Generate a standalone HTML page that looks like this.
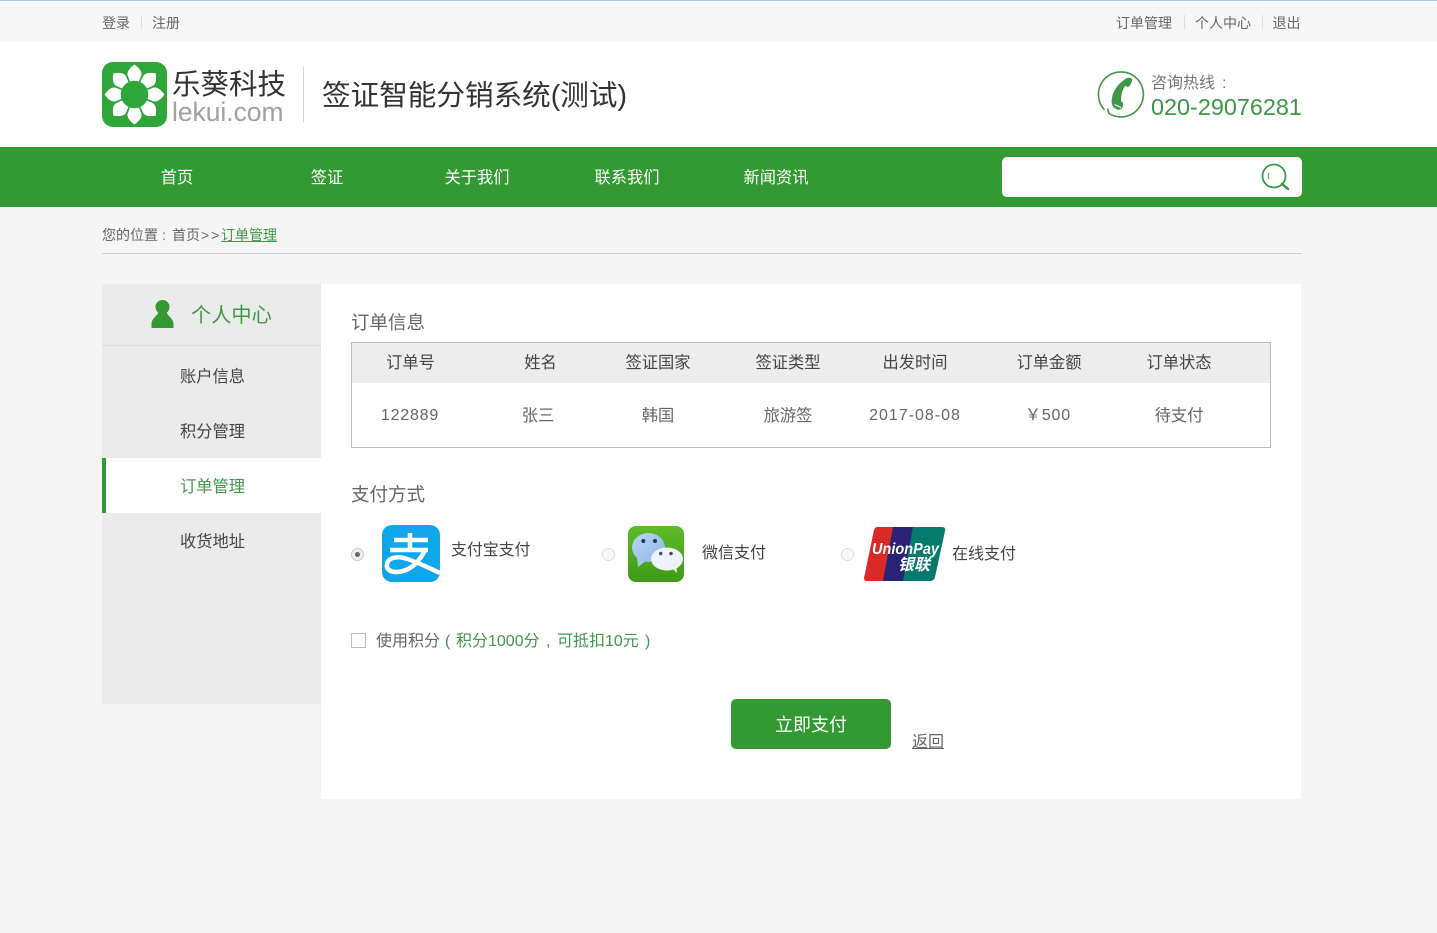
<!DOCTYPE html>
<html lang="zh-CN"><head><meta charset="utf-8"><title>订单管理</title>
<style>
*{margin:0;padding:0;box-sizing:border-box}
html,body{width:1437px;height:933px;overflow:hidden;background:#f5f5f5}
body{position:relative;font-family:"Liberation Sans","Noto Sans CJK SC",sans-serif;color:#444}
.b{position:absolute}
.t{position:absolute;white-space:nowrap;line-height:20px;font-size:16.250px;color:#555}
.c{text-align:center}
.n{letter-spacing:.8px}
svg{position:absolute;display:block}
</style></head><body>
<div class="b" style="left:0;top:0;width:1437px;height:42px;background:#f7f7f7;border-top:1px solid #b4c3dc"></div>
<div class="t" style="left:102px;top:13px;font-size:14px;color:#666">登录</div>
<div class="b" style="left:141px;top:15px;width:1px;height:14px;background:#ddd"></div>
<div class="t" style="left:152px;top:13px;font-size:14px;color:#666">注册</div>
<div class="t" style="left:1116px;top:13px;font-size:14px;color:#666">订单管理</div>
<div class="b" style="left:1184px;top:15px;width:1px;height:14px;background:#ddd"></div>
<div class="t" style="left:1195px;top:13px;font-size:14px;color:#666">个人中心</div>
<div class="b" style="left:1262px;top:15px;width:1px;height:14px;background:#ddd"></div>
<div class="t" style="left:1272.500px;top:13px;font-size:14px;color:#666">退出</div>

<div class="b" style="left:0;top:42px;width:1437px;height:105px;background:#fff"></div>
<svg style="left:102px;top:62px" width="65" height="65" viewBox="0 0 65 65">
<rect width="65" height="65" rx="11" fill="#2ea63a"/>
<g fill="#fff">
<path d="M32.500 2.500 C37 6 40 9 39.500 13 L37 19.500 Q32.500 18 28 19.500 L25.500 13 C25 9 28 6 32.500 2.500Z"/>
<path transform="rotate(45 32.500 32.500)" d="M32.500 2.500 C37 6 40 9 39.500 13 L37 19.500 Q32.500 18 28 19.500 L25.500 13 C25 9 28 6 32.500 2.500Z"/>
<path transform="rotate(90 32.500 32.500)" d="M32.500 2.500 C37 6 40 9 39.500 13 L37 19.500 Q32.500 18 28 19.500 L25.500 13 C25 9 28 6 32.500 2.500Z"/>
<path transform="rotate(135 32.500 32.500)" d="M32.500 2.500 C37 6 40 9 39.500 13 L37 19.500 Q32.500 18 28 19.500 L25.500 13 C25 9 28 6 32.500 2.500Z"/>
<path transform="rotate(180 32.500 32.500)" d="M32.500 2.500 C37 6 40 9 39.500 13 L37 19.500 Q32.500 18 28 19.500 L25.500 13 C25 9 28 6 32.500 2.500Z"/>
<path transform="rotate(225 32.500 32.500)" d="M32.500 2.500 C37 6 40 9 39.500 13 L37 19.500 Q32.500 18 28 19.500 L25.500 13 C25 9 28 6 32.500 2.500Z"/>
<path transform="rotate(270 32.500 32.500)" d="M32.500 2.500 C37 6 40 9 39.500 13 L37 19.500 Q32.500 18 28 19.500 L25.500 13 C25 9 28 6 32.500 2.500Z"/>
<path transform="rotate(315 32.500 32.500)" d="M32.500 2.500 C37 6 40 9 39.500 13 L37 19.500 Q32.500 18 28 19.500 L25.500 13 C25 9 28 6 32.500 2.500Z"/>
</g>
<circle cx="32.500" cy="32.500" r="13" fill="#2ea63a"/>
</svg>
<div class="t" style="left:172px;top:68px;font-size:28.500px;line-height:34px;color:#333">乐葵科技</div>
<div class="t" style="left:172px;top:96px;font-size:26.400px;line-height:32px;color:#a0a0a0">lekui.com</div>
<div class="b" style="left:303px;top:67px;width:1px;height:55px;background:#d5d5d5"></div>
<div class="t" style="left:322px;top:77px;font-size:28.600px;line-height:38px;color:#333">签证智能分销系统(测试)</div>

<svg style="left:1097px;top:71px" width="48" height="48" viewBox="0 0 48 48">
<path d="M7.500 38.800 A22.500 22.500 0 1 1 12 42.500 L10.500 37.500" fill="none" stroke="#3f9748" stroke-width="1.600"/>
<path d="M27 9 C30 6 33 6 35 8 L35 10 C34 13 33 15 31 16 L28 15 C25 19 24 25 24 30 L26 32 L26 35 C25 38 22 40 19 38 C15 36 14 32 15 27 C16 20 21 13 27 9Z" fill="#3f9748"/>
<path d="M17.500 33.500 L24 36.500" stroke="#fff" stroke-width="1"/>
</svg>
<div class="t" style="left:1151px;top:74px;font-size:16px;color:#777">咨询热线</div>
<div class="t" style="left:1222px;top:74px;font-size:16px;color:#777">:</div>
<div class="t" style="left:1151px;top:92px;font-size:23.400px;line-height:30px;color:#3c9646">020-29076281</div>

<div class="b" style="left:0;top:147px;width:1437px;height:60px;background:#339933"></div>
<div class="t c" style="left:102px;top:168px;width:150px;color:#fff">首页</div>
<div class="t c" style="left:252px;top:168px;width:150px;color:#fff">签证</div>
<div class="t c" style="left:402px;top:168px;width:150px;color:#fff">关于我们</div>
<div class="t c" style="left:552px;top:168px;width:150px;color:#fff">联系我们</div>
<div class="t c" style="left:701px;top:168px;width:150px;color:#fff">新闻资讯</div>
<div class="b" style="left:1002px;top:157px;width:300px;height:40px;background:#fff;border-radius:5px"></div>
<svg style="left:1260px;top:162px" width="32" height="30" viewBox="0 0 32 30">
<circle cx="14" cy="14" r="11.500" fill="none" stroke="#3f9748" stroke-width="1.800"/>
<path d="M22 22 L28 27" stroke="#3f9748" stroke-width="2.500" stroke-linecap="round"/>
<path d="M9 11 Q7.500 14 9 17" fill="none" stroke="#3f9748" stroke-width="1"/>
</svg>

<div class="t" style="left:102px;top:225px;font-size:14px;color:#666">您的位置</div>
<div class="t" style="left:162px;top:225px;font-size:14px;color:#666">:</div>
<div class="t" style="left:172px;top:225px;font-size:14px;color:#666">首页</div>
<div class="t" style="left:201px;top:225px;font-size:14px;color:#666;letter-spacing:2px">&gt;&gt;</div>
<div class="t" style="left:221px;top:225px;font-size:14px;color:#3f9748;text-decoration:underline">订单管理</div>
<div class="b" style="left:102px;top:253px;width:1200px;height:1px;background:#ccc"></div>

<div class="b" style="left:102px;top:284px;width:219px;height:420px;background:#ebebeb"></div>
<div class="b" style="left:102px;top:345px;width:219px;height:1px;background:#ddd"></div>
<svg style="left:151px;top:300px" width="23" height="29" viewBox="0 0 23 29">
<circle cx="11.500" cy="7" r="7" fill="#339933"/>
<path d="M8 11 H15 C16 16 22.500 18 22.500 24 V28 H.5 V24 C.5 18 7 16 8 11Z" fill="#339933"/>
</svg>
<div class="t" style="left:191px;top:303px;font-size:20.200px;line-height:26px;color:#3f9748">个人中心</div>
<div class="t c" style="left:102px;top:367px;width:221px;color:#444">账户信息</div>
<div class="t c" style="left:102px;top:422px;width:221px;color:#444">积分管理</div>
<div class="b" style="left:102px;top:458px;width:219px;height:55px;background:#fff;border-left:4px solid #339933"></div>
<div class="t c" style="left:102px;top:477px;width:221px;color:#3f9748">订单管理</div>
<div class="t c" style="left:102px;top:532px;width:221px;color:#444">收货地址</div>

<div class="b" style="left:321px;top:284px;width:980px;height:515px;background:#fff"></div>
<div class="t" style="left:351px;top:313px;font-size:18.500px;color:#666">订单信息</div>
<div class="b" style="left:351px;top:342px;width:920px;height:106px;border:1px solid #bbb"></div>
<div class="b" style="left:352px;top:343px;width:918px;height:40px;background:#ededed"></div>

<div class="t c" style="left:350.500px;top:353px;width:120px;color:#444">订单号</div>
<div class="t c" style="left:480.500px;top:353px;width:120px;color:#444">姓名</div>
<div class="t c" style="left:598px;top:353px;width:120px;color:#444">签证国家</div>
<div class="t c" style="left:728px;top:353px;width:120px;color:#444">签证类型</div>
<div class="t c" style="left:855px;top:353px;width:120px;color:#444">出发时间</div>
<div class="t c" style="left:989px;top:353px;width:120px;color:#444">订单金额</div>
<div class="t c" style="left:1119px;top:353px;width:120px;color:#444">订单状态</div>

<div class="t c n" style="left:350px;top:406px;width:120px;color:#666;font-size:16px">122889</div>
<div class="t c" style="left:478px;top:406px;width:120px;color:#666">张三</div>
<div class="t c" style="left:598px;top:406px;width:120px;color:#666">韩国</div>
<div class="t c" style="left:728px;top:406px;width:120px;color:#666">旅游签</div>
<div class="t c" style="left:855px;top:406px;width:120px;color:#666;letter-spacing:1px;font-size:16px">2017-08-08</div>
<div class="t c n" style="left:988px;top:406px;width:120px;color:#666;font-size:16px">￥500</div>
<div class="t c" style="left:1119px;top:406px;width:120px;color:#666">待支付</div>

<div class="t" style="left:351px;top:485px;font-size:18.500px;color:#666">支付方式</div>

<div class="b" style="left:351px;top:548px;width:13px;height:13px;border-radius:50%;border:1px solid #ccc;background:#eee"></div>
<div class="b" style="left:355px;top:552px;width:5px;height:5px;border-radius:50%;background:#666"></div>
<svg style="left:382px;top:525px" width="58" height="57" viewBox="0 0 58 57">
<defs><clipPath id="ac"><rect width="58" height="57" rx="10"/></clipPath></defs>
<rect width="58" height="57" rx="10" fill="#0fa7ea"/>
<path clip-path="url(#ac)" d="M12 15 H46 M28 8 V25 M8 25 H46 M43 25 C38 36 28 47 14 47 C7 47 4 43 5 39 C6 33 14 31 22 33 C33 36 45 42 58 48" fill="none" stroke="#fff" stroke-width="4.500"/>
</svg>
<div class="t" style="left:451px;top:541px;color:#444;font-size:15.900px">支付宝支付</div>

<div class="b" style="left:602px;top:548px;width:13px;height:13px;border-radius:50%;border:1px solid #ddd;background:#f8f8f8"></div>
<svg style="left:628px;top:526px" width="56" height="56" viewBox="0 0 56 56">
<defs><linearGradient id="wg" x1="0" y1="0" x2="0" y2="1"><stop offset="0" stop-color="#5fbb2c"/><stop offset="1" stop-color="#3f9a14"/></linearGradient>
<linearGradient id="wb" x1="0" y1="0" x2="1" y2="1"><stop offset="0" stop-color="#b7d6f3"/><stop offset="1" stop-color="#8fb6e4"/></linearGradient></defs>
<rect width="56" height="56" rx="8" fill="url(#wg)"/>
<path d="M9 32 L10 41 L19 34Z" fill="#a6c8ec"/>
<ellipse cx="20.500" cy="21.500" rx="16.500" ry="14.500" fill="url(#wb)"/>
<circle cx="15.300" cy="15" r="2" fill="#1b3a55"/><circle cx="27" cy="15" r="2" fill="#1b3a55"/>
<path d="M43 41 L49 47 L48 38Z" fill="#e6edf7"/>
<ellipse cx="39" cy="33" rx="16" ry="11.500" fill="#eef3fa"/>
<circle cx="32.700" cy="27.500" r="1.800" fill="#44505a"/><circle cx="43" cy="27.500" r="1.800" fill="#44505a"/>
</svg>
<div class="t" style="left:702px;top:544px;color:#444;font-size:16px">微信支付</div>

<div class="b" style="left:841px;top:548px;width:13px;height:13px;border-radius:50%;border:1px solid #ddd;background:#f8f8f8"></div>
<svg style="left:864px;top:526px" width="82" height="56" viewBox="0 0 82 56">
<path d="M13 1 H33 L21 55 H3 Q0 55 0 52 L10 4 Q11 1 13 1Z" fill="#da2a27"/>
<path d="M29 1 H53 L41 55 H19 Z" fill="#2a2277"/>
<path d="M49 1 H78 Q82 1 81 5 L71 51 Q70 55 66 55 H39 Z" fill="#047a6d"/>
<text x="8" y="28" font-family="Liberation Sans,sans-serif" font-size="16" font-weight="700" font-style="italic" fill="#fff" textLength="67" lengthAdjust="spacingAndGlyphs">UnionPay</text>
<text x="34" y="44" font-family="Noto Sans CJK SC,sans-serif" font-size="16" font-weight="700" font-style="italic" fill="#fff">银联</text>
</svg>
<div class="t" style="left:952px;top:545px;color:#444;font-size:16px">在线支付</div>

<div class="b" style="left:351px;top:633px;width:15px;height:15px;border:1px solid #bbb;background:#fff"></div>
<div class="t" style="left:376px;top:632px;color:#666;font-size:16px">使用积分</div>
<div class="t" style="left:445px;top:632px;color:#3f9748;font-size:16px">(</div>
<div class="t" style="left:456px;top:632px;color:#3f9748;font-size:16px">积分1000分</div>
<div class="t" style="left:546px;top:632px;color:#3f9748;font-size:16px">,</div>
<div class="t" style="left:557px;top:632px;color:#3f9748;font-size:16px">可抵扣10元</div>
<div class="t" style="left:645px;top:632px;color:#3f9748;font-size:16px">)</div>

<div class="b" style="left:731px;top:699px;width:160px;height:50px;background:#339933;border-radius:5px"></div>
<div class="t c" style="left:731px;top:715px;width:160px;font-size:18px;color:#fff">立即支付</div>
<div class="t" style="left:912px;top:733px;color:#666;text-decoration:underline;font-size:16px">返回</div>
</body></html>
